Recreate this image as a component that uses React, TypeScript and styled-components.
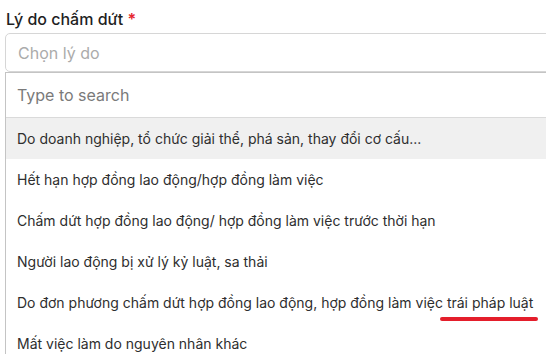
import * as React from "react";
import styled, { createGlobalStyle } from "styled-components";

const REASONS = [
  "Do doanh nghiệp, tổ chức giải thể, phá sản, thay đổi cơ cấu...",
  "Hết hạn hợp đồng lao động/hợp đồng làm việc",
  "Chấm dứt hợp đồng lao động/ hợp đồng làm việc trước thời hạn",
  "Người lao động bị xử lý kỷ luật, sa thải",
  "Do đơn phương chấm dứt hợp đồng lao động, hợp đồng làm việc |trái pháp luật",
  "Mất việc làm do nguyên nhân khác",
];

const GlobalStyle = createGlobalStyle`
  html, body {
    margin: 0;
    padding: 0;
    background: #ffffff;
    overflow: hidden;
    font-family: Inter, "Noto Sans", "Liberation Sans", sans-serif;
  }
`;

function App() {
  const [active, setActive] = React.useState(0);
  const [query, setQuery] = React.useState("");

  return (
    <Page>
      <GlobalStyle />
      <Label>
        Lý do chấm dứt <Required>*</Required>
      </Label>
      <Field>
        <SelectBox>
          <Placeholder>Chọn lý do</Placeholder>
        </SelectBox>
        <Dropdown>
          <SearchRow>
            <SearchInput
              autoFocus
              placeholder="Type to search"
              value={query}
              onChange={(e) => setQuery(e.target.value)}
            />
          </SearchRow>
          {REASONS.map((r, i) => {
            const [plain, marked] = r.split("|");
            return (
              <Option
                key={i}
                $active={i == active}
                onMouseEnter={() => setActive(i)}
              >
                {plain}
                {marked && <Marked>{marked}</Marked>}
              </Option>
            );
          })}
        </Dropdown>
      </Field>
    </Page>
  );
}

const Page = styled.div`
  width: 100vw;
  box-sizing: border-box;
  overflow: hidden;
  padding: 9px 0 0 5px;
`;

const Label = styled.div`
  padding-left: 1px;
  font-size: 16px;
  font-weight: 500;
  line-height: 20px;
  color: #1f1f1f;
  margin-bottom: 4px;
`;

const Required = styled.span`
  color: #e5262d;
  font-weight: 600;
`;

const Field = styled.div`
  display: flex;
  flex-direction: column;
  margin-right: -20px;
`;

const SelectBox = styled.div`
  height: 37px;
  border: 1px solid #d6d6d6;
  border-radius: 5px;
  display: flex;
  align-items: center;
  padding-left: 12px;
`;

const Placeholder = styled.span`
  font-size: 16px;
  color: #ababab;
`;

const Dropdown = styled.div`
  border: 1px solid #c4c4c4;
  border-right: none;
  background: #ffffff;
`;

const SearchRow = styled.div`
  height: 44px;
  display: flex;
  align-items: center;
  padding-left: 11px;
  border-bottom: 1px solid #dadada;
`;

const SearchInput = styled.input`
  border: none;
  outline: none;
  font-family: inherit;
  font-size: 16px;
  color: #333333;
  width: 300px;
  padding: 0;
  caret-color: #111111;
  &::placeholder {
    color: #7a7a7a;
  }
`;

const Option = styled.div<{ $active: boolean }>`
  height: 41px;
  display: flex;
  align-items: center;
  padding-left: 11px;
  font-size: 14px;
  color: #2e2e2e;
  white-space: pre;
  background: ${(p) => (p.$active ? "#f0f0f0" : "#ffffff")};
  cursor: pointer;
`;

const Marked = styled.span`
  position: relative;
  &::after {
    content: "";
    position: absolute;
    left: -7px;
    right: -5px;
    bottom: -10px;
    height: 4px;
    border-radius: 2px;
    background: #e41e2b;
  }
`;

export default App;
